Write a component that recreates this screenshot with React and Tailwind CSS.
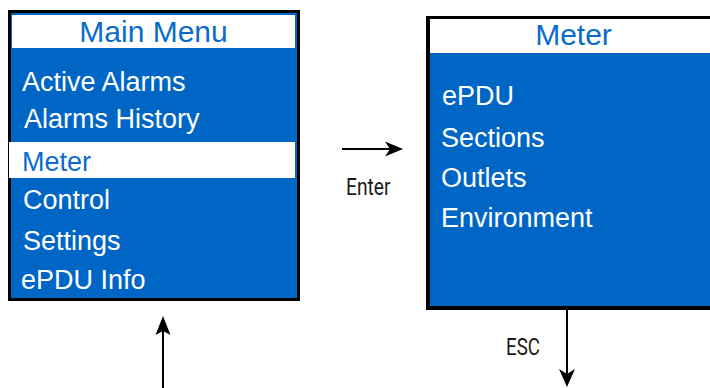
import React from 'react';

const font = { fontFamily: '"Liberation Sans", Arial, sans-serif' };
const labelFont = { fontFamily: 'Roboto, "Liberation Sans", sans-serif' };

function RightArrow() {
  return (
    <svg width="66" height="18" viewBox="0 0 66 18" className="block">
      <line x1="2" y1="9" x2="52" y2="9" stroke="#000" strokeWidth="2" />
      <path d="M63 9 L45 1.5 L50 9 L45 16.5 Z" fill="#000" />
    </svg>
  );
}

function UpArrow() {
  return (
    <svg width="18" height="74" viewBox="0 0 18 74" className="block">
      <line x1="9" y1="16" x2="9" y2="74" stroke="#000" strokeWidth="2" />
      <path d="M9 2 L1.5 21 L9 17 L16.5 21 Z" fill="#000" />
    </svg>
  );
}

function DownArrow() {
  return (
    <svg width="18" height="78" viewBox="0 0 18 78" className="block">
      <line x1="9" y1="0" x2="9" y2="66" stroke="#000" strokeWidth="2" />
      <path d="M9 77 L1 59 L9 64 L17 59 Z" fill="#000" />
    </svg>
  );
}

export default function App() {
  return (
    <div className="w-[710px] h-[388px] overflow-hidden bg-white flex" style={font}>
      {/* Main menu screen */}
      <div className="flex flex-col pl-[8px] pt-[10px] w-[300px] shrink-0">
        <div className="w-[292px] h-[291px] border-[3px] border-black bg-[#0066c6] flex flex-col text-[27px] text-white">
          <div className="mt-[2px] ml-[1px] mr-[2px] h-[33px] bg-white text-center text-[30px] leading-[33px] text-[#0a6bcc]">
            Main Menu
          </div>
          <div className="mt-[16px] pl-[11px] leading-[36px]">Active Alarms</div>
          <div className="mt-[1px] pl-[13px] leading-[36px]">Alarms History</div>
          <div className="mt-[5px] -ml-[2px] mr-[2px] h-[36px] pt-[2px] pl-[13px] bg-white leading-[36px] text-[#0a6bcc]">
            Meter
          </div>
          <div className="mt-[4px] pl-[12px] leading-[36px]">Control</div>
          <div className="mt-[5px] pl-[12px] leading-[36px]">Settings</div>
          <div className="mt-[3px] pl-[10px] leading-[36px]">ePDU Info</div>
        </div>
        <div className="mt-[13px] ml-[146px]">
          <UpArrow />
        </div>
      </div>

      {/* Enter transition */}
      <div className="w-[126px] shrink-0 flex flex-col pt-[140px]">
        <div className="ml-[40px]">
          <RightArrow />
        </div>
        <div
          className="mt-[17px] ml-[46px] text-[24px] leading-[24px] text-[#1a1a1a] origin-left scale-x-[0.8]"
          style={labelFont}
        >
          Enter
        </div>
      </div>

      {/* Meter screen */}
      <div className="flex flex-col pt-[16px] shrink-0">
        <div className="w-[295px] h-[294px] border-[4px] border-t-[3px] border-black bg-[#0066c6] flex flex-col text-[27px] text-white">
          <div className="h-[34px] bg-white text-center text-[30px] leading-[32px] text-[#0a6bcc]">Meter</div>
          <div className="mt-[25px] pl-[12px] leading-[36px]">ePDU</div>
          <div className="mt-[6px] pl-[11px] leading-[36px]">Sections</div>
          <div className="mt-[4px] pl-[11px] leading-[36px]">Outlets</div>
          <div className="mt-[4px] pl-[11px] leading-[36px]">Environment</div>
        </div>
        <div className="flex">
          <div className="w-[132px] shrink-0 pl-[80px] pt-[25px]">
            <div
              className="text-[24px] leading-[24px] text-[#1a1a1a] origin-left scale-x-[0.78]"
              style={labelFont}
            >
              ESC
            </div>
          </div>
          <DownArrow />
        </div>
      </div>
    </div>
  );
}
